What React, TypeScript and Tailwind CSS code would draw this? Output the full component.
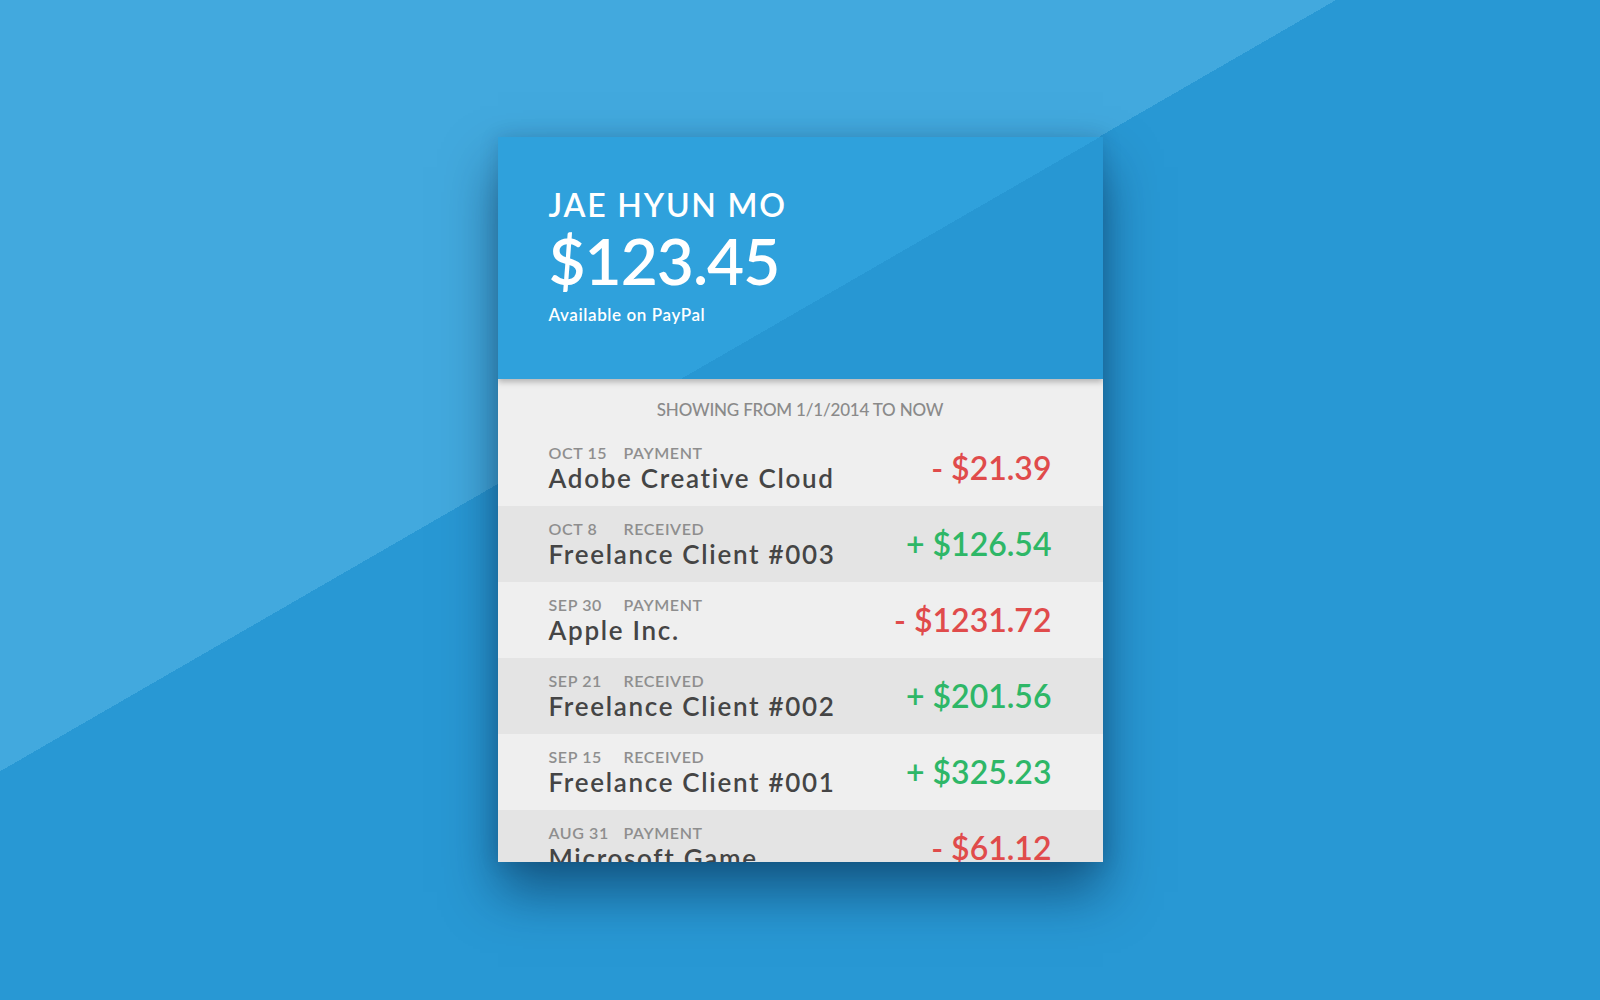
const rows = [
  { date: 'OCT 15', kind: 'PAYMENT', name: 'Adobe Creative Cloud', amount: '- $21.39', alt: false },
  { date: 'OCT 8', kind: 'RECEIVED', name: 'Freelance Client #003', amount: '+ $126.54', alt: true },
  { date: 'SEP 30', kind: 'PAYMENT', name: 'Apple Inc.', amount: '- $1231.72', alt: false },
  { date: 'SEP 21', kind: 'RECEIVED', name: 'Freelance Client #002', amount: '+ $201.56', alt: true },
  { date: 'SEP 15', kind: 'RECEIVED', name: 'Freelance Client #001', amount: '+ $325.23', alt: false },
  { date: 'AUG 31', kind: 'PAYMENT', name: 'Microsoft Game', amount: '- $61.12', alt: true },
];

function Row({ date, kind, name, amount, alt }: (typeof rows)[number]) {
  const received = kind === 'RECEIVED';
  return (
    <li className={`flex h-[76px] shrink-0 items-center justify-between px-[51px] ${alt ? 'bg-[#e4e4e4]' : 'bg-[#efefef]'}`}>
      <div className="flex flex-col">
        <div className="flex text-[16px] leading-[16px] font-semibold tracking-[0.6px] text-[#8e8e8e]">
          <span className="w-[75px]">{date}</span>
          <span>{kind}</span>
        </div>
        <p className="mt-[5px] text-[26px] leading-[25px] font-semibold tracking-[1.7px] text-[#454545]">{name}</p>
      </div>
      <p className={`text-[32px] leading-[32px] font-semibold ${received ? 'text-[#2eb767]' : 'text-[#e04b4b]'}`}>
        {amount}
      </p>
    </li>
  );
}

export default function App() {
  return (
    <section
      className="h-screen w-full overflow-hidden pt-[137px] bg-[linear-gradient(150deg,#42a9de_668px,#2898d4_668px)]"
      style={{ fontFamily: 'Lato, "Open Sans", sans-serif' }}
    >
      <article className="mx-auto flex h-[725px] w-[605px] flex-col overflow-hidden bg-[#efefef] shadow-[0_30px_50px_rgba(0,25,55,0.5),0_0_18px_rgba(0,30,60,0.15)]">
        <header className="relative z-10 h-[242px] shrink-0 px-[51px] pt-[52px] text-white shadow-[0_3px_6px_rgba(0,0,0,0.25)] bg-[linear-gradient(150deg,#2fa1dc_301px,#2797d3_301px)]">
          <h1 className="text-[32px] leading-[32px] font-semibold tracking-[1.8px]">JAE HYUN MO</h1>
          <h2 className="mt-[8px] text-[64px] leading-[64px] font-semibold tracking-[-1px]">$123.45</h2>
          <p className="mt-[13px] text-[17px] leading-[17px] font-semibold tracking-[0.6px]">Available on PayPal</p>
        </header>
        <div className="flex h-[51px] shrink-0 justify-center pt-[22px]">
          <h3 className="text-[17px] leading-[17px] font-medium tracking-[-0.2px] text-[#8a8a8a]">
            SHOWING FROM 1/1/2014 TO NOW
          </h3>
        </div>
        <ul className="flex flex-col">
          {rows.map((r) => (
            <Row key={r.date} {...r} />
          ))}
        </ul>
      </article>
    </section>
  );
}
